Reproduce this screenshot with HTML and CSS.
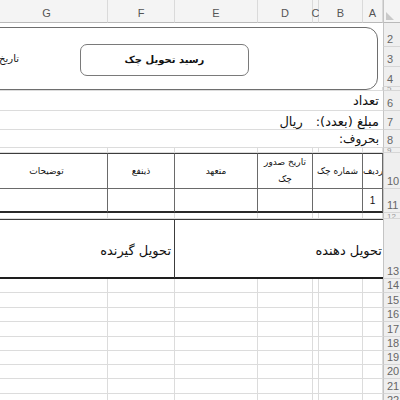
FILE: index.html
```html
<!DOCTYPE html>
<html lang="fa">
<head>
  <meta charset="UTF-8">
  <title>رسید تحویل چک</title>
  <link rel="stylesheet" href="styles.css">
</head>
<body>
<div class="sheet">

  <div class="row head">
    <div class="col">G</div><div class="col">F</div><div class="col">E</div><div class="col">D</div>
    <div class="col">C</div><div class="col">B</div><div class="col">A</div>
    <div class="corner"><svg width="8" height="8" viewBox="0 0 8 8"><polygon points="0,0 0,8 8,8" fill="#c9c9c9"/></svg></div>
  </div>

  <div class="row r2"><div class="blank"></div><div class="rh">2</div></div>
  <div class="row r3"><div class="blank"></div><div class="rh">3</div></div>
  <div class="row r4"><div class="blank"></div><div class="rh">4</div></div>
  <div class="row r5">
    <div class="c"></div><div class="c"></div><div class="c"></div><div class="c"></div><div class="c"></div><div class="c"></div><div class="c"></div>
    <div class="rh tiny">5</div>
  </div>

  <div class="row r6"><div class="note big">تعداد</div><div class="rh">6</div></div>
  <div class="row r7"><div class="note big"><span>مبلغ (بعدد):</span><span class="unit">ریال</span></div><div class="rh">7</div></div>
  <div class="row r8"><div class="note">بحروف:</div><div class="rh">8</div></div>
  <div class="row r9">
    <div class="c"></div><div class="c"></div><div class="c"></div><div class="c"></div><div class="c"></div><div class="c"></div><div class="c"></div>
    <div class="rh tiny">9</div>
  </div>

  <!-- check table -->
  <div class="row r10">
    <div class="t">توضیحات</div>
    <div class="t">ذینفع</div>
    <div class="t">متعهد</div>
    <div class="t wrap">تاریخ صدور<br>چک</div>
    <div class="t span2">شماره چک</div>
    <div class="t tight">ردیف</div>
    <div class="rh">10</div>
  </div>
  <div class="row r11">
    <div class="t"></div><div class="t"></div><div class="t"></div><div class="t"></div>
    <div class="t span2"></div>
    <div class="t num">1</div>
    <div class="rh">11</div>
  </div>
  <div class="row r12">
    <div class="c"></div><div class="c"></div><div class="c"></div><div class="c"></div><div class="c"></div><div class="c"></div><div class="c"></div>
    <div class="rh tiny">12</div>
  </div>

  <!-- signatures -->
  <div class="row r13">
    <div class="sig left">تحویل گیرنده</div>
    <div class="sig right">تحویل دهنده</div>
    <div class="rh">13</div>
  </div>

  <div class="row r14"><div class="c"></div><div class="c"></div><div class="c"></div><div class="c"></div><div class="c"></div><div class="c"></div><div class="c"></div><div class="rh">14</div></div>
  <div class="row r15"><div class="c"></div><div class="c"></div><div class="c"></div><div class="c"></div><div class="c"></div><div class="c"></div><div class="c"></div><div class="rh">15</div></div>
  <div class="row r14"><div class="c"></div><div class="c"></div><div class="c"></div><div class="c"></div><div class="c"></div><div class="c"></div><div class="c"></div><div class="rh">16</div></div>
  <div class="row r15"><div class="c"></div><div class="c"></div><div class="c"></div><div class="c"></div><div class="c"></div><div class="c"></div><div class="c"></div><div class="rh">17</div></div>
  <div class="row r14"><div class="c"></div><div class="c"></div><div class="c"></div><div class="c"></div><div class="c"></div><div class="c"></div><div class="c"></div><div class="rh">18</div></div>
  <div class="row r14"><div class="c"></div><div class="c"></div><div class="c"></div><div class="c"></div><div class="c"></div><div class="c"></div><div class="c"></div><div class="rh">19</div></div>
  <div class="row r14"><div class="c"></div><div class="c"></div><div class="c"></div><div class="c"></div><div class="c"></div><div class="c"></div><div class="c"></div><div class="rh">20</div></div>
  <div class="row r15"><div class="c"></div><div class="c"></div><div class="c"></div><div class="c"></div><div class="c"></div><div class="c"></div><div class="c"></div><div class="rh">21</div></div>
  <div class="row r14"><div class="c"></div><div class="c"></div><div class="c"></div><div class="c"></div><div class="c"></div><div class="c"></div><div class="c"></div><div class="rh">22</div></div>

  <!-- header shape drawn over rows 2-4 -->
  <div class="frame">
    <div class="title-box">رسید تحویل چک</div>
    <div class="date">تاریخ</div>
  </div>

</div>
</body>
</html>
```

FILE: styles.css
```css
html, body { margin: 0; padding: 0; background: #fff; overflow: hidden; }
* { box-sizing: border-box; }

.sheet { position: relative; width: 417px; margin-left: -14px; font-family: "DejaVu Sans", sans-serif; color: #111; }
.row { display: grid; grid-template-columns: 122px 67px 83px 55px 6px 44px 20px 20px; }

/* column + row headers */
.head { height: 23px; }
.col { background: #f4f4f4; border-right: 1px solid #dadada; border-bottom: 1px solid #b9b9b9; color: #555; font: 11px "Liberation Sans", sans-serif; display: flex; align-items: center; justify-content: center; padding-top: 3px; }
.corner { background: #f4f4f4; border-bottom: 1px solid #b9b9b9; border-left: 1px solid #c4c4c4; padding: 12px 0 0 2px; line-height: 0; }
.rh { background: #efefef; border-left: 1px solid #c4c4c4; border-bottom: 1px solid #d6d6d6; color: #666; font: 11px "Liberation Sans", sans-serif; line-height: 11px; display: flex; align-items: flex-end; justify-content: flex-start; padding: 0 0 1px 3px; overflow: hidden; }
.rh.tiny { padding: 0 0 0 3px; line-height: 3px; font-size: 8px; color: #999; }

/* row heights */
.r2 { height: 24px; }
.r3, .r4, .r6 { height: 20px; }
.r5 { height: 4px; }
.r7 { height: 19px; }
.r8 { height: 18px; }
.r9 { height: 5px; }
.r10 { height: 36px; }
.r11 { height: 24px; }
.r12 { height: 6px; }
.r13 { height: 60px; }
.r14 { height: 14px; }
.r15 { height: 15px; }

/* plain grid cells */
.c { border-right: 1px solid #dcdcdc; border-bottom: 1px solid #dcdcdc; }
.blank { grid-column: span 7; }

/* amount lines */
.note { grid-column: span 7; border-bottom: 1px solid #dcdcdc; direction: rtl; display: flex; align-items: center; gap: 13px; padding-right: 4px; font-size: 12px; }
.note.big { font-size: 13px; }
.r7 .note { padding-top: 2px; }

/* check table */
.t { border-right: 1px solid #6a6a6a; border-bottom: 1px solid #6a6a6a; direction: rtl; display: flex; align-items: center; justify-content: center; text-align: center; font-size: 9px; white-space: nowrap; overflow: hidden; }
.r10 .t { border-top: 1px solid #3c3c3c; }
.r11 .t { border-bottom: 2px solid #2a2a2a; }
.t.span2 { grid-column: span 2; }
.t.wrap { line-height: 17px; }
.t.tight { justify-content: flex-end; padding: 0; }
.t.num { font: 10px "Liberation Sans", sans-serif; }

/* signature row */
.sig { border-top: 1px solid #3c3c3c; border-bottom: 2px solid #1e1e1e; direction: rtl; display: flex; align-items: center; font-size: 13px; white-space: nowrap; padding-top: 3px; }
.sig.left { grid-column: span 2; border-right: 1px solid #3c3c3c; padding-right: 3px; }
.sig.right { grid-column: span 5; padding-right: 1px; }

/* rounded shape over the title area */
.frame { position: absolute; top: 27px; left: -46px; right: 25px; height: 63px; background: #fff; border: 1px solid #6e6e6e; border-radius: 12px; direction: rtl; display: flex; align-items: center; padding-right: 128px; }
.title-box { width: 169px; height: 32px; margin-top: 2px; border: 1px solid #7a7a7a; border-radius: 7px; display: flex; align-items: center; justify-content: center; font-size: 10px; font-weight: bold; }
.date { margin-right: 61px; font-size: 10px; }
```
